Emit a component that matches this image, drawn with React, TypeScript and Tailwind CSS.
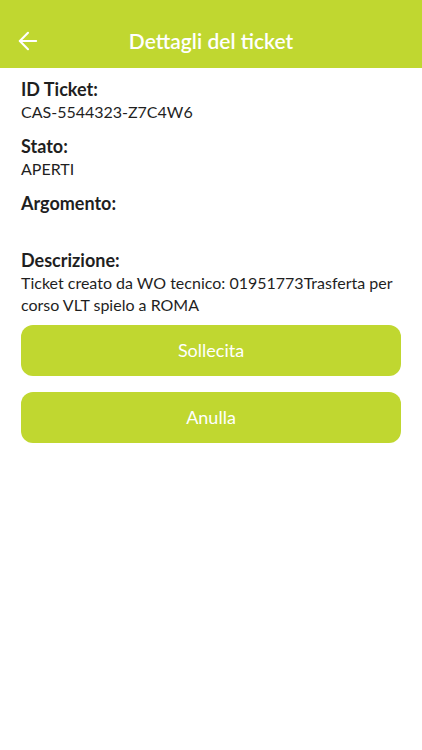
import { ArrowLeft } from 'lucide-react';

const fields = [
  { label: 'ID Ticket:', value: 'CAS-5544323-Z7C4W6' },
  { label: 'Stato:', value: 'APERTI' },
  { label: 'Argomento:', value: '' },
  {
    label: 'Descrizione:',
    value: 'Ticket creato da WO tecnico: 01951773Trasferta per corso VLT spielo a ROMA',
  },
];

export default function App() {
  return (
    <div className="min-h-[750px] bg-white font-['Lato',sans-serif] text-[#1f1f1f]">
      <header className="flex h-[68px] items-center bg-[#c0d730] px-[14px] pt-[13px] text-white">
        <ArrowLeft className="h-[28px] w-[28px]" strokeWidth={1.8} />
        <h1 className="flex-1 pr-[28px] text-center text-[21px] font-semibold">Dettagli del ticket</h1>
      </header>

      <main className="px-[21px] pt-[10px]">
        <div className="flex flex-col gap-[11px]">
          {fields.map((f) => (
            <div key={f.label}>
              <div className="text-[18px] font-bold leading-[23px]">{f.label}</div>
              <div className="min-h-[23px] text-[16px] leading-[22px]">{f.value}</div>
            </div>
          ))}
        </div>

        <div className="mt-[9px] flex flex-col gap-[16px]">
          <button className="h-[51px] rounded-[12px] bg-[#c0d730] text-[18px] text-white">Sollecita</button>
          <button className="h-[51px] rounded-[12px] bg-[#c0d730] text-[18px] text-white">Anulla</button>
        </div>
      </main>
    </div>
  );
}
